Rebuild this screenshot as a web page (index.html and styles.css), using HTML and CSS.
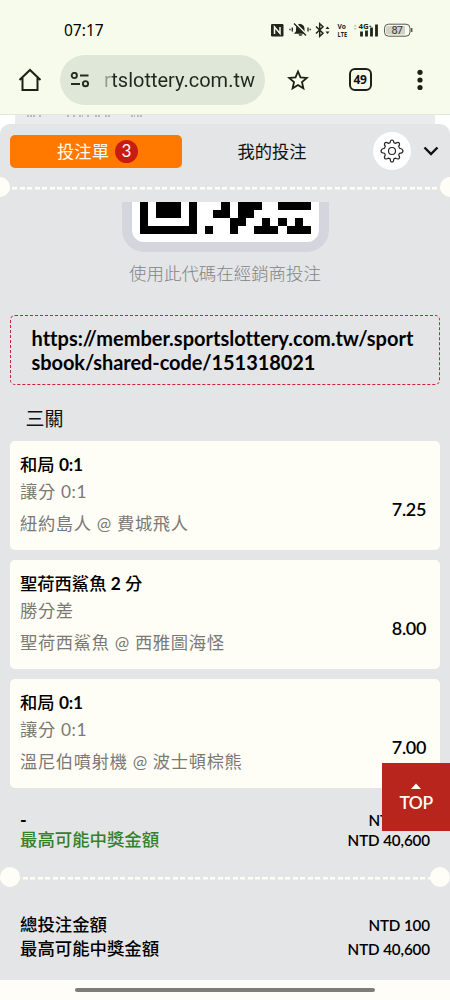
FILE: index.html
```html
<!DOCTYPE html>
<html lang="zh-Hant">
<head>
<meta charset="utf-8">
<title>投注單</title>
<link rel="stylesheet" href="styles.css">
</head>
<body>
<div class="screen">
  <header class="browser">
    <div class="status">
      <span class="clock">07:17</span>
      <svg class="status-icons" width="144" height="18" viewBox="0 0 144 18">
        <rect x="1" y="3" width="12.500" height="12.500" rx="1.200" fill="#20251d"/>
        <path d="M4.500 13V6l5.500 6.500V6" fill="none" stroke="#f7fbec" stroke-width="1.500"/>
        <path d="M30 2.800c-3 .5-4 2.500-4 5v2.500l-2 2.500h12.500l-2-2.500V7.800c0-2.500-1.500-4.500-4.500-5zM28.500 13.300h4c-.5 2-3.500 2-4 0z" fill="#20251d"/>
        <path d="M25 2l12 12" stroke="#f7fbec" stroke-width="1.800"/>
        <path d="M24 2.500l12 12M22.300 6.500v4M20 7.800v1.500M38 6.500v4M40.200 7.800v1.500" stroke="#20251d" stroke-width="1.300"/>
        <path d="M46 5.500l7 6.700-3.300 3V2.700l3.300 3-7 6.800" fill="none" stroke="#20251d" stroke-width="1.500"/>
        <path d="M55.500 8l2-2.500 2 2.500zM55.500 10.500l2 2.500 2-2.500z" fill="#20251d"/>
        <text class="tiny" x="67.500" y="8.300" textLength="8.500" lengthAdjust="spacingAndGlyphs">Vo</text>
        <text class="tiny" x="67.500" y="15.500" textLength="9.500" lengthAdjust="spacingAndGlyphs">LTE</text>
        <path d="M83.500 5.500l1.700-2 1.700 2zM83.500 7l1.700 2 1.700-2z" fill="#c3c8ba"/>
        <text class="tiny" x="88.500" y="8" textLength="13" lengthAdjust="spacingAndGlyphs">4G⁺</text>
        <path d="M91.500 15.500v-5M96.500 15.500V9.500M101.500 15.500V6.500M106.500 15.500V3.500" stroke="#20251d" stroke-width="2.800"/>
        <rect x="114.500" y="3.200" width="25.500" height="12" rx="4" fill="#f7fbec" stroke="#555a51"/>
        <path d="M118 5h17v8.500h-17q-2 0-2-2V7q0-2 2-2z" fill="#cfd2c8"/>
        <path d="M141.700 7v4" stroke="#555a51" stroke-width="1.500"/>
        <text class="battery" x="121.500" y="13" textLength="11.500">87</text>
      </svg>
    </div>
    <div class="toolbar">
      <svg class="home" width="24" height="24" viewBox="0 0 24 24"><path d="M1.500 12L12 2l10.500 10M4.500 10v12h15V10" fill="none" stroke="#1c2118" stroke-width="2"/></svg>
      <div class="address">
        <svg width="20" height="16" viewBox="0 0 20 16" fill="none" stroke="#262b22" stroke-width="1.900"><circle cx="4.300" cy="3.500" r="2.600"/><path d="M10 3.500h8.500M1 12h9"/><circle cx="15.500" cy="11.700" r="2.600"/></svg>
        <span class="url">rtslottery.com.tw</span>
      </div>
      <svg class="star" width="22" height="22" viewBox="0 0 22 22"><path d="M11 2.500l2.500 5.800 6.300.6-4.800 4.200 1.400 6.200L11 16l-5.400 3.300L7 13.100 2.200 8.900l6.300-.6z" fill="none" stroke="#1c2118" stroke-width="1.800"/></svg>
      <span class="tabs">49</span>
      <svg class="more" width="6" height="22" viewBox="0 0 6 22" fill="#1c2118"><circle cx="3" cy="3.300" r="2.600"/><circle cx="3" cy="11" r="2.600"/><circle cx="3" cy="18.500" r="2.600"/></svg>
    </div>
  </header>
  <div class="backdrop"><div class="backdrop-panel">
    <svg width="130" height="3"><path d="M12 1h8M24 1h3M52 1h3M58 1h2M64 1h4M72 1h3M80 1h6M90 1h6M116 1h4M122 1h5" stroke="#aaa" stroke-width="1.500" stroke-dasharray="2 1"/></svg>
  </div></div>
  <main class="sheet">
    <nav class="sheet-tabs">
      <div class="tab active">投注單<span class="count">3</span></div>
      <div class="tab">我的投注</div>
      <div class="gear"><svg width="24" height="24" viewBox="0 0 24 24" fill="none" stroke="#222" stroke-width="1.150" stroke-linejoin="round"><circle cx="12" cy="12" r="3.500"/><path d="M10.200 3.600Q10.300 1 12 1t1.800 2.600l2 .8q2-1.600 3.200-.6 1.300 1.200-.3 3.400l.8 2Q23 9.800 23 12t-3.500 2.300l-.8 1.800q1.600 2.200.4 3.400-1.300 1.200-3.400-.4l-1.900.8Q13.700 23 12 23t-1.800-3.100l-1.900-.8q-2.100 1.600-3.400.4-1.200-1.200.4-3.400l-.8-1.800Q1 14.100 1 12t3.500-2.800l.8-2Q3.700 5 5 3.800q1.200-1 3.200.6z"/></svg></div>
      <svg class="chevron" width="18" height="12" viewBox="0 0 18 12"><path d="M2.500 2.500L9 9l6.500-6.500" fill="none" stroke="#111" stroke-width="2.400"/></svg>
    </nav>
    <div class="tear tear-top"></div>
    <section class="share">
      <div class="qr">
        <svg width="171" height="32" viewBox="0 0 21 4" preserveAspectRatio="none" shape-rendering="crispEdges"><path d="M0 0h1v3h5v-3h1v4h-7zM2 0h3v2h-3zM10 0h1v2h-2v-1h1zM12 0h3v1h-1v1h-1v1h-1v1h-1v-2h1zM17 0h4v1h-4zM8 3h1v1h-1zM14 3h1v-1h1v1h1v1h-3zM17 2h1v1h-1zM18 3h1v-1h1v1h1v1h-3z"/></svg>
      </div>
      <p class="hint">使用此代碼在經銷商投注</p>
      <div class="link">https://member.sportslottery.com.tw/sport<br><span class="code">sbook/shared-code/151318021</span></div>
    </section>
    <h2 class="group">三關</h2>
    <section class="cards">
      <article class="card"><div><h3>和局 <b>0:1</b></h3><p>讓分 0:1</p><p class="match">紐約島人 @ 費城飛人</p></div><b class="odds">7.25</b></article>
      <article class="card"><div><h3>聖荷西鯊魚 <b>2</b> 分</h3><p>勝分差</p><p class="match">聖荷西鯊魚 @ 西雅圖海怪</p></div><b class="odds">8.00</b></article>
      <article class="card"><div><h3>和局 <b>0:1</b></h3><p>讓分 0:1</p><p class="match">溫尼伯噴射機 @ 波士頓棕熊</p></div><b class="odds">7.00</b></article>
    </section>
    <section class="sum">
      <div class="row thin"><b>-</b><b>NTD 100</b></div>
      <div class="row win"><span>最高可能中獎金額</span><b>NTD 40,600</b></div>
    </section>
    <div class="tear tear-bottom"></div>
    <section class="total">
      <div class="row"><span>總投注金額</span><b>NTD 100</b></div>
      <div class="row"><span>最高可能中獎金額</span><b>NTD 40,600</b></div>
    </section>
  </main>
  <footer class="gesture"><i></i></footer>
  <a class="top"><svg width="12" height="6" viewBox="0 0 12 6"><path d="M1 6l5-5.500L11 6z" fill="#fffdf4"/></svg>TOP</a>
</div>
</body>
</html>
```

FILE: styles.css
```css
* { box-sizing: border-box; }
body, h2, h3, p { margin: 0; }
body { font-family: Lato, "Noto Sans CJK TC", sans-serif; color: #111; }
.screen { position: relative; width: 450px; height: 1000px; overflow: hidden; display: flex; flex-direction: column; background: #fff; }
svg { display: block; flex: none; }
b { font-weight: 600; }

.browser { height: 115px; background: #f7fbec; flex: none; border-bottom: 1px solid #e4e7dc; }
.status { display: flex; justify-content: space-between; padding: 21px 36px 0 64px; height: 54px; }
.clock { font: 400 15.500px/19px "Noto Sans", sans-serif; color: #000; }
.tiny { font: 700 6.500px "Open Sans", sans-serif; fill: #20251d; }
.battery { font: 400 11px Roboto, sans-serif; fill: #333830; }
.toolbar { display: flex; align-items: center; height: 51px; padding-left: 18px; }
.address { width: 205px; height: 50px; margin-left: 18px; border-radius: 25px; background: #dfe8d8; display: flex; align-items: center; padding-left: 10px; }
.url { margin-left: 14px; font: 400 20px/26px Roboto, sans-serif; white-space: nowrap; background: linear-gradient(90deg, #a5ad9e 0, #7d8477 6px, #22271e 10px); -webkit-background-clip: text; color: transparent; }
.star { margin-left: 21.500px; }
.tabs { margin-left: 40px; width: 23px; height: 23px; border: 2px solid #1c2118; border-radius: 6px; font: 700 12px/19px "Open Sans", sans-serif; text-align: center; letter-spacing: -0.300px; }
.more { margin-left: 45.500px; }

.backdrop { height: 20px; padding: 0 15px; background: #fff; flex: none; }
.backdrop-panel { height: 20px; background: #ebebed; }

.sheet { height: 856px; margin-top: -11px; background: #e4e5e7; border-radius: 10px 10px 0 0; flex: none; }
.sheet-tabs { height: 53px; padding: 1px 0 0 10px; display: flex; align-items: center; }
.tab { width: 180px; height: 33px; display: flex; align-items: center; justify-content: center; font-size: 17.300px; line-height: 33px; }
.tab.active { width: 172px; background: #ff7900; color: #fffdf4; border-radius: 5px; padding-left: 3px; }
.count { width: 23px; height: 23px; border-radius: 50%; background: #c81c12; margin-left: 6px; text-align: center; font-size: 17px; line-height: 22px; }
.gear { width: 38px; height: 38px; margin-left: 11px; border-radius: 50%; background: #fff; display: flex; align-items: center; justify-content: center; }
.chevron { margin-left: 10.500px; }

.tear { display: flex; align-items: center; justify-content: space-between; height: 20px; background: repeating-linear-gradient(90deg, #fffef6 0 5px, transparent 5px 7.500px) 0 10px / 100% 2.500px no-repeat; }
.tear::before, .tear::after { content: ""; width: 20px; height: 20px; border-radius: 50%; background: #fffef6; }
.tear-top { margin: 0 -10px; }

.share { display: flex; flex-direction: column; align-items: center; padding: 5px 10px 0; }
.qr { width: 207px; height: 50px; border: solid #d5d6dd; border-width: 0 10px 10px; border-radius: 0 0 22px 22px; background: #fff; display: flex; justify-content: center; }
.hint { margin-top: 9px; font-size: 17.450px; line-height: 26px; color: #838486; font-weight: 300; }
.link { width: 430px; height: 70px; margin-top: 28px; padding: 10px 0 0 20.500px; border: 1px dashed #c32333; border-radius: 5px; font-size: 20px; line-height: 24px; font-weight: 700; white-space: nowrap; color: #000; font-variant-ligatures: none; }
.code { letter-spacing: -0.080px; }
.group { margin: 20px 0 0 25.500px; height: 27px; font-size: 19px; line-height: 27px; font-weight: 400; }

.cards { display: flex; flex-direction: column; gap: 10px; padding: 9px 10px 0; }
.card { height: 109px; border-radius: 5px; background: #fffef6; padding: 11px 14px 0 10px; display: flex; justify-content: space-between; }
.card h3 { font-size: 17.300px; line-height: 26px; font-weight: 500; color: #000; }
.card h3 b { letter-spacing: -0.200px; font-weight: 700; }
.card p { margin-top: 1px; font-size: 17.300px; line-height: 26px; letter-spacing: 0.650px; color: #7a7975; font-weight: 400; }
.card .match { margin-top: 6px; }
.odds { margin-top: 46px; font-size: 18px; line-height: 22px; letter-spacing: -0.350px; color: #000; }

.row { display: flex; justify-content: space-between; align-items: center; padding: 0 20px; font-size: 17.400px; line-height: 24px; height: 24px; font-weight: 500; color: #000; }
.row b { font-size: 15.200px; letter-spacing: -0.120px; }
.row.thin b:first-child { font-size: 18px; font-weight: 700; }
.sum { padding-top: 24px; height: 79px; }
.row.thin { height: 16px; line-height: 16px; }
.row.win span { color: #35802c; }
.total { padding-top: 26px; }

.gesture { height: 20px; background: #fffdf7; display: flex; justify-content: center; align-items: center; flex: none; }
.gesture i { width: 300px; height: 4px; border-radius: 2px; background: #7e7d77; }
.top { position: absolute; left: 382px; top: 763px; width: 68px; height: 68px; background: #b8251d; color: #fffdf4; display: flex; flex-direction: column; align-items: center; padding-top: 20px; font-size: 17.500px; line-height: 28px; font-weight: 600; letter-spacing: -0.500px; }
```
